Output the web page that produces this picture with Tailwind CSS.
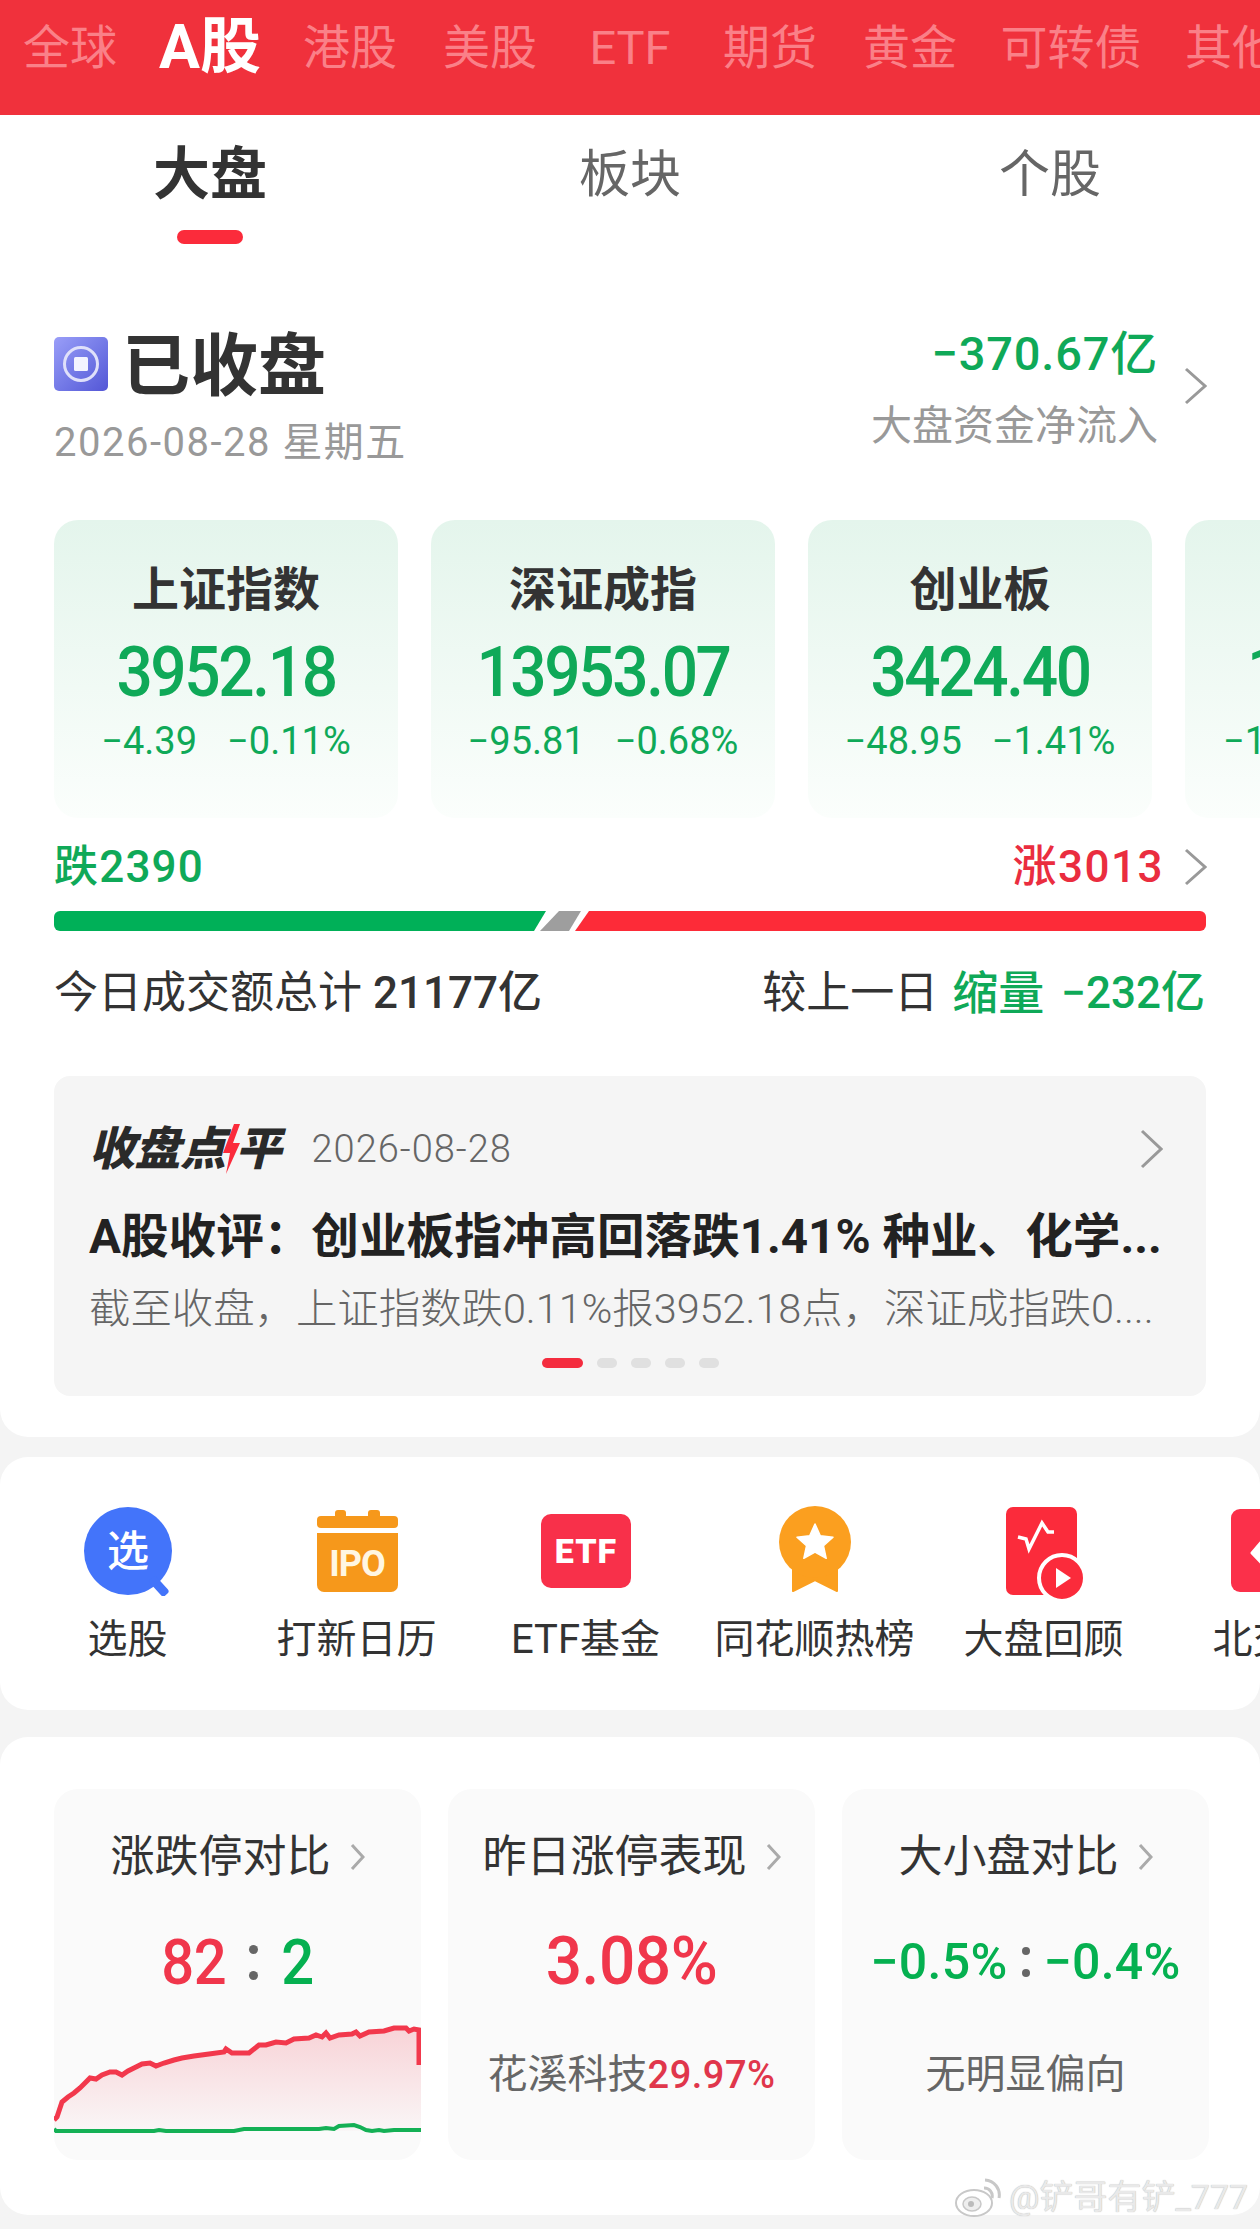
<!DOCTYPE html>
<html lang="zh-CN">
<head>
<meta charset="utf-8">
<script src="https://cdn.jsdelivr.net/npm/@tailwindcss/browser@4"></script>
</head>
<body class="m-0">
<div class="relative w-[1260px] h-[2229px] overflow-hidden bg-[#f4f4f4] font-['Roboto','Noto_Sans_CJK_SC',sans-serif] text-[#333]">

  <!-- market tabs -->
  <div class="h-[115px] bg-[#f0313c]">
    <div class="flex h-[96px] items-center text-center text-[47px] text-[#fa8088] whitespace-nowrap">
      <div class="w-[140px] shrink-0">全球</div>
      <div class="w-[140px] shrink-0 text-[61px] font-bold text-white">A股</div>
      <div class="w-[140px] shrink-0">港股</div>
      <div class="w-[140px] shrink-0">美股</div>
      <div class="w-[140px] shrink-0">ETF</div>
      <div class="w-[140px] shrink-0">期货</div>
      <div class="w-[140px] shrink-0">黄金</div>
      <div class="w-[182px] shrink-0">可转债</div>
      <div class="w-[140px] shrink-0">其他</div>
    </div>
  </div>

  <!-- main card -->
  <div class="h-[1322px] rounded-b-[28px] bg-white">
    <div class="grid h-[115px] grid-cols-3 items-center pt-[5px] text-center text-[51px] text-[#666]">
      <div class="text-[57px] font-bold text-[#333]">大盘</div>
      <div>板块</div>
      <div>个股</div>
    </div>
    <div class="ml-[177px] h-[14px] w-[66px] rounded-full bg-[#fb2b3b]"></div>

    <!-- status row -->
    <div class="mt-[84px] flex justify-between pl-[54px] pr-[53px]">
      <div>
        <div class="flex h-[72px] items-center gap-[14px]">
          <div class="flex h-[54px] w-[54px] items-center justify-center rounded-[5px] bg-gradient-to-br from-[#9a9ef8] to-[#5456d6]">
            <svg width="38" height="38" viewBox="0 0 38 38"><circle cx="19" cy="19" r="16.5" fill="none" stroke="#dfe0fa" stroke-width="3"/><rect x="12" y="12" width="14" height="14" rx="1.5" fill="#f3f4ff"/></svg>
          </div>
          <div class="h-[72px] text-[68px] font-bold leading-[78px] text-[#333]">已收盘</div>
        </div>
        <div class="h-[84px] text-[40px] leading-[86px] tracking-[1.5px] text-[#999]">2026-08-28 星期五</div>
      </div>
      <div class="flex">
        <div class="text-right">
          <div class="h-[48px] text-[47px] font-medium leading-[52px] tracking-[0.8px] text-[#0fa958]">−370.67亿</div>
          <div class="text-[41px] leading-[100px] text-[#999]">大盘资金净流入</div>
        </div>
        <svg class="ml-[26px] mt-[39px]" width="23" height="38" viewBox="0 0 23 38"><polyline points="2,2 21,19 2,36" fill="none" stroke="#999" stroke-width="3"/></svg>
      </div>
    </div>

    <!-- index cards -->
    <div class="mt-[36px] flex h-[298px] gap-[33px] overflow-hidden pl-[54px] text-[#0fa958]">
      <div class="flex w-[344px] shrink-0 flex-col items-center rounded-[24px] bg-gradient-to-b from-[#e4f5ec] to-[#fbfefc] pt-[50px]">
        <div class="h-[40px] text-[47px] font-bold leading-[40px] text-[#333]">上证指数</div>
        <div class="mt-[32px] h-[60px] scale-y-110 text-[64px] font-medium leading-[62px] tracking-[-2.4px]">3952.18</div>
        <div class="mt-[23px] flex h-[32px] gap-[30px] text-[38px] leading-[32px]"><span>−4.39</span><span>−0.11%</span></div>
      </div>
      <div class="flex w-[344px] shrink-0 flex-col items-center rounded-[24px] bg-gradient-to-b from-[#e4f5ec] to-[#fbfefc] pt-[50px]">
        <div class="h-[40px] text-[47px] font-bold leading-[40px] text-[#333]">深证成指</div>
        <div class="mt-[32px] h-[60px] scale-y-110 text-[64px] font-medium leading-[62px] tracking-[-2.4px]">13953.07</div>
        <div class="mt-[23px] flex h-[32px] gap-[30px] text-[38px] leading-[32px]"><span>−95.81</span><span>−0.68%</span></div>
      </div>
      <div class="flex w-[344px] shrink-0 flex-col items-center rounded-[24px] bg-gradient-to-b from-[#e4f5ec] to-[#fbfefc] pt-[50px]">
        <div class="h-[40px] text-[47px] font-bold leading-[40px] text-[#333]">创业板</div>
        <div class="mt-[32px] h-[60px] scale-y-110 text-[64px] font-medium leading-[62px] tracking-[-2.4px]">3424.40</div>
        <div class="mt-[23px] flex h-[32px] gap-[30px] text-[38px] leading-[32px]"><span>−48.95</span><span>−1.41%</span></div>
      </div>
      <div class="w-[344px] shrink-0 rounded-[24px] bg-gradient-to-b from-[#e4f5ec] to-[#fbfefc] pt-[122px]">
        <div class="h-[60px] scale-y-110 origin-left pl-[62px] text-[64px] font-medium leading-[62px]">1</div>
        <div class="mt-[23px] h-[32px] pl-[38px] text-[38px] leading-[32px]">−1</div>
      </div>
    </div>

    <!-- rise/fall -->
    <div class="mt-[27px] flex h-[40px] items-center justify-between pl-[54px] pr-[53px] pt-[3px] text-[44px] font-medium">
      <div class="tracking-[1.2px] text-[#0fa958]">跌2390</div>
      <div class="flex items-center gap-[20px] text-[#ea2d3f]">
        <div class="tracking-[1.5px]">涨3013</div>
        <svg width="23" height="38" viewBox="0 0 23 38"><polyline points="2,2 21,19 2,36" fill="none" stroke="#999" stroke-width="3"/></svg>
      </div>
    </div>
    <div class="mx-[54px] mt-[26px] h-[20px] overflow-hidden rounded-[6px]">
      <svg class="block" width="1152" height="20" viewBox="0 0 1152 20">
        <polygon points="0,0 492,0 480,20 0,20" fill="#00b058"/>
        <polygon points="505,0 527,0 515,20 486,20" fill="#9e9e9e"/>
        <polygon points="535,0 1152,0 1152,20 521,20" fill="#fd2b38"/>
      </svg>
    </div>

    <!-- volume -->
    <div class="mt-[39px] flex h-[42px] items-center justify-between pl-[54px] pr-[55px] pt-[3px] text-[44px] leading-[42px]">
      <div>今日成交额总计 <span class="font-medium">21177亿</span></div>
      <div class="flex"><span class="mr-[14px]">较上一日</span><span class="mr-[17px] text-[46px] font-medium text-[#0fa958]">缩量</span><span class="font-medium text-[#0fa958]">−232亿</span></div>
    </div>

    <!-- review -->
    <div class="mx-[54px] mt-[64px] h-[320px] rounded-[16px] bg-[#f5f5f5] px-[35px] pt-[46px]">
      <div class="flex h-[50px] items-center justify-between pt-[4px]">
        <div class="flex items-center">
          <div class="flex items-center text-[46px] font-black italic leading-[50px] text-[#2a2a2a]">
            <span class="tracking-[-0.5px]">收盘点</span>
            <svg class="-ml-[3px]" width="18" height="50" viewBox="0 0 18 50"><polygon points="11,0 0,29 7,29 3,50 17,19 10,19 17,0" fill="#fb2b3b"/></svg>
            <span class="-ml-[5px]">平</span>
          </div>
          <div class="ml-[30px] text-[38px] font-light leading-[50px] tracking-[1px] text-[#666]">2026-08-28</div>
        </div>
        <svg class="mr-[8px]" width="23" height="40" viewBox="0 0 23 40"><polyline points="2,2 21,20 2,38" fill="none" stroke="#999" stroke-width="3"/></svg>
      </div>
      <div class="mt-[43px] h-[45px] whitespace-nowrap text-[47.6px] font-bold leading-[45px] text-[#222]">A股收评：创业板指冲高回落跌1.41% 种业、化学...</div>
      <div class="mt-[30px] h-[38px] whitespace-nowrap text-[41.4px] font-light leading-[38px] text-[#666]">截至收盘，上证指数跌0.11%报3952.18点，深证成指跌0....</div>
      <div class="mt-[30px] flex justify-center gap-[14px]">
        <div class="h-[10px] w-[41px] rounded-full bg-[#f42c3e]"></div>
        <div class="h-[10px] w-[20px] rounded-full bg-[#e0e0e0]"></div>
        <div class="h-[10px] w-[20px] rounded-full bg-[#e0e0e0]"></div>
        <div class="h-[10px] w-[20px] rounded-full bg-[#e0e0e0]"></div>
        <div class="h-[10px] w-[20px] rounded-full bg-[#e0e0e0]"></div>
      </div>
    </div>
  </div>

  <!-- shortcuts -->
  <div class="mt-[20px] flex h-[253px] overflow-hidden rounded-[28px] bg-white pl-[13px] pt-[49px] text-center text-[40px] leading-[40px] text-[#333]">
    <div class="flex w-[229px] shrink-0 flex-col items-center">
      <svg width="100" height="90" viewBox="0 0 100 90"><circle cx="50" cy="45" r="44" fill="#4374fa"/><rect x="76" y="70" width="9" height="22" rx="3" transform="rotate(-42 80 80)" fill="#4374fa"/><text x="50" y="60" text-anchor="middle" font-size="42" font-weight="500" fill="#fff" font-family="Noto Sans CJK SC">选</text></svg>
      <div class="mt-[24px] whitespace-nowrap">选股</div>
    </div>
    <div class="flex w-[229px] shrink-0 flex-col items-center">
      <svg width="100" height="90" viewBox="0 0 100 90"><rect x="28" y="4" width="11" height="12" rx="3" fill="#f6981b"/><rect x="61" y="4" width="12" height="12" rx="3" fill="#f6981b"/><rect x="10" y="10" width="81" height="12" rx="4" fill="#f6981b"/><path d="M10 27h81v52a7 7 0 0 1-7 7H17a7 7 0 0 1-7-7z" fill="#f6981b"/><text x="50" y="70" text-anchor="middle" font-size="36" font-weight="700" fill="#fff6e2" letter-spacing="-1" font-family="Roboto">IPO</text></svg>
      <div class="mt-[24px] whitespace-nowrap">打新日历</div>
    </div>
    <div class="flex w-[229px] shrink-0 flex-col items-center">
      <svg width="100" height="90" viewBox="0 0 100 90"><rect x="5" y="8" width="90" height="74" rx="10" fill="#f8304a"/><text x="50" y="57" text-anchor="middle" font-size="34" font-weight="900" fill="#fff" letter-spacing="1" font-family="Roboto">ETF</text></svg>
      <div class="mt-[24px] whitespace-nowrap">ETF基金</div>
    </div>
    <div class="flex w-[229px] shrink-0 flex-col items-center">
      <svg width="100" height="90" viewBox="0 0 100 90"><polygon points="28,56 72,56 72,85 50,74 28,85" fill="#fb9f1f" stroke="#fb9f1f" stroke-width="2" stroke-linejoin="round"/><circle cx="50" cy="36" r="36" fill="#fb9f1f"/><polygon points="50,18 55.3,29.7 68,31.2 58.5,39.8 61.2,52.3 50,46 38.8,52.3 41.5,39.8 32,31.2 44.7,29.7" fill="#fff" stroke="#fff" stroke-width="1.5" stroke-linejoin="round"/></svg>
      <div class="mt-[24px] whitespace-nowrap">同花顺热榜</div>
    </div>
    <div class="flex w-[229px] shrink-0 flex-col items-center">
      <svg width="100" height="94" viewBox="0 0 100 94" class="-mb-[4px]"><rect x="12" y="1" width="71" height="88" rx="7" fill="#fb2b3b"/><circle cx="68" cy="72" r="23" fill="#fb2b3b" stroke="#fff" stroke-width="4"/><polygon points="62,62 77,72 62,82" fill="#fff"/><polyline points="24,31 32,33 35,43 48,17 54,26 60,26" fill="none" stroke="#fff" stroke-width="3.5"/></svg>
      <div class="mt-[24px] whitespace-nowrap">大盘回顾</div>
    </div>
    <div class="flex w-[229px] shrink-0 flex-col items-center">
      <svg width="100" height="90" viewBox="0 0 100 90"><rect x="8" y="3" width="90" height="83" rx="9" fill="#fb304a"/><polygon points="29,47 41,33 65,33 77,47 53,72" fill="#fff" stroke="#fff" stroke-width="3" stroke-linejoin="round"/></svg>
      <div class="mt-[24px] whitespace-nowrap">北交所</div>
    </div>
  </div>

  <!-- comparisons -->
  <div class="mt-[27px] flex h-[478px] gap-[27px] rounded-[28px] bg-white pl-[54px] pt-[52px]">
    <div class="flex h-[371px] w-[367px] flex-col items-center overflow-hidden rounded-[24px] bg-[#fafafa] pt-[48px]">
      <div class="flex h-[40px] items-center gap-[19px] text-[44px] leading-[40px]">
        <span>涨跌停对比</span>
        <svg width="15" height="28" viewBox="0 0 15 28"><polyline points="2,2 13,14 2,26" fill="none" stroke="#aaa" stroke-width="3"/></svg>
      </div>
      <div class="mt-[55px] flex h-[60px] items-center text-[58px] font-medium leading-[60px] tracking-[-0.5px]">
        <span class="scale-y-110 text-[#f0364b]">82</span>
        <span class="mx-[23px] flex flex-col gap-[17px]"><span class="block h-[9px] w-[9px] rounded-full bg-[#666]"></span><span class="block h-[9px] w-[9px] rounded-full bg-[#666]"></span></span>
        <span class="scale-y-110 text-[#05b050]">2</span>
      </div>
      <svg class="mt-[33px] shrink-0" width="367" height="110" viewBox="0 0 367 110">
        <defs><linearGradient id="fillRed" x1="0" y1="0" x2="0" y2="1"><stop offset="0" stop-color="#f0364b" stop-opacity="0.2"/><stop offset="1" stop-color="#f0364b" stop-opacity="0.02"/></linearGradient></defs>
        <polygon fill="url(#fillRed)" points="0,95 3,92 8,77 14,72 20,68 26,63 32,57 36,53 42,54 48,50 56,47 62,47 68,50 74,46 82,42 88,39 96,38 102,41 110,38 120,35 128,33 140,31 155,29 170,27 172,24 178,28 195,28 205,20 212,20 222,17 232,18 240,14 255,13 262,10 268,12 272,8 276,13 285,10 298,9 302,7 306,11 315,7 330,6 340,3 352,3 355,6 360,4 365,5 367,8 367,106 0,106"/>
        <polyline fill="none" stroke="#f2384c" stroke-width="5" points="0,95 3,92 8,77 14,72 20,68 26,63 32,57 36,53 42,54 48,50 56,47 62,47 68,50 74,46 82,42 88,39 96,38 102,41 110,38 120,35 128,33 140,31 155,29 170,27 172,24 178,28 195,28 205,20 212,20 222,17 232,18 240,14 255,13 262,10 268,12 272,8 276,13 285,10 298,9 302,7 306,11 315,7 330,6 340,3 352,3 355,6 360,4 365,5 365,40"/>
        <polyline fill="none" stroke="#14b055" stroke-width="4" points="0,104 2,106 100,106 105,105 112,106 180,106 190,104 265,104 272,103 280,104 285,101 300,100 306,102 312,105 318,106 325,105 330,106 340,105 367,105"/>
      </svg>
    </div>
    <div class="flex h-[371px] w-[367px] flex-col items-center rounded-[24px] bg-[#fafafa] pt-[48px]">
      <div class="flex h-[40px] items-center gap-[19px] text-[44px] leading-[40px]">
        <span>昨日涨停表现</span>
        <svg width="15" height="28" viewBox="0 0 15 28"><polyline points="2,2 13,14 2,26" fill="none" stroke="#aaa" stroke-width="3"/></svg>
      </div>
      <div class="mt-[55px] h-[60px] scale-y-105 text-[64px] font-medium leading-[60px] tracking-[-0.5px] text-[#f0364b]">3.08%</div>
      <div class="mt-[63px] h-[40px] whitespace-nowrap text-[40px] leading-[40px] text-[#666]">花溪科技<span class="text-[38px] font-medium tracking-[0.5px] text-[#e0364b]">29.97%</span></div>
    </div>
    <div class="flex h-[371px] w-[367px] flex-col items-center rounded-[24px] bg-[#fafafa] pt-[48px]">
      <div class="flex h-[40px] items-center gap-[19px] text-[44px] leading-[40px]">
        <span>大小盘对比</span>
        <svg width="15" height="28" viewBox="0 0 15 28"><polyline points="2,2 13,14 2,26" fill="none" stroke="#aaa" stroke-width="3"/></svg>
      </div>
      <div class="mt-[55px] flex h-[60px] items-center whitespace-nowrap text-[50px] font-medium leading-[60px] tracking-[0.3px] text-[#05b050]">
        <span>−0.5%</span>
        <span class="mx-[14px] flex flex-col gap-[14px]"><span class="block h-[8px] w-[8px] rounded-full bg-[#666]"></span><span class="block h-[8px] w-[8px] rounded-full bg-[#666]"></span></span>
        <span>−0.4%</span>
      </div>
      <div class="mt-[63px] h-[40px] text-[40px] leading-[40px] text-[#666]">无明显偏向</div>
    </div>
  </div>

  <!-- watermark -->
  <div class="absolute left-[955px] top-[2176px] flex items-center gap-[8px]">
    <svg width="46" height="42" viewBox="0 0 46 42"><ellipse cx="19" cy="27" rx="18" ry="13" fill="#fff" stroke="#c8c8c8" stroke-width="2"/><ellipse cx="17" cy="28" rx="9" ry="7" fill="#eee" stroke="#c8c8c8" stroke-width="1.5"/><circle cx="16" cy="28" r="3" fill="#bbb"/><path d="M29 12a8 8 0 0 1 8 10M30 4a15 15 0 0 1 14 18" fill="none" stroke="#c8c8c8" stroke-width="3"/></svg>
    <div class="text-[34px] leading-[42px] text-[#e9e9e9] [text-shadow:0_0_1px_#aaa] whitespace-nowrap">@铲哥有铲_777</div>
  </div>
</div>
</body>
</html>
